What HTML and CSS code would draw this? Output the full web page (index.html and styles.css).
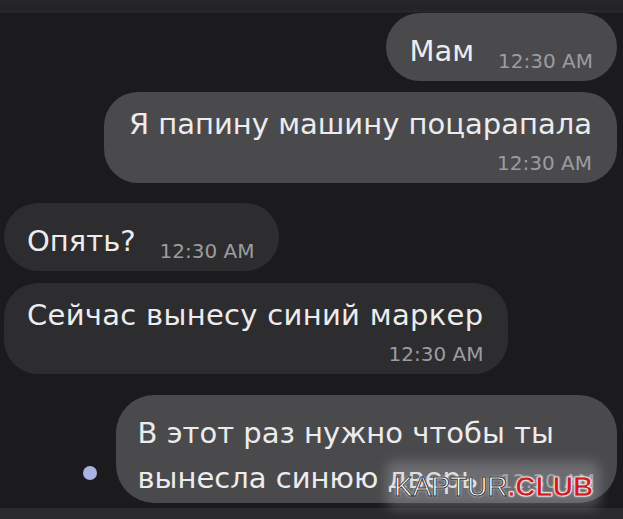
FILE: index.html
```html
<!DOCTYPE html>
<html lang="ru">
<head>
<meta charset="utf-8">
<title>Chat</title>
<link rel="stylesheet" href="styles.css">
</head>
<body>
<div class="screen">
  <div class="topbar"></div>
  <div class="thread">
    <div class="row out r1">
      <div class="bubble sent single"><span class="msg">Мам</span><span class="time">12:30 AM</span></div>
    </div>
    <div class="row out r2">
      <div class="bubble sent multi">
        <div class="msg">Я папину машину поцарапала</div>
        <div class="time">12:30 AM</div>
      </div>
    </div>
    <div class="row in r3">
      <div class="bubble recv single"><span class="msg">Опять?</span><span class="time">12:30 AM</span></div>
    </div>
    <div class="row in r4">
      <div class="bubble recv multi">
        <div class="msg wide">Сейчас вынесу синий маркер</div>
        <div class="time">12:30 AM</div>
      </div>
    </div>
    <div class="row out r5">
      <span class="dot"></span>
      <div class="bubble sent wrap">
        <span class="msg">В этот раз нужно чтобы ты<br>вынесла синюю дверь</span><span class="time">12:30 AM</span>
      </div>
    </div>
  </div>
  <div class="bottombar"></div>
  <div class="watermark">
    <div class="haze"></div>
    <span class="wm-a">KAPTUR</span><span class="wm-b">.CLUB</span>
  </div>
</div>
</body>
</html>
```
FILE: styles.css
```css
html, body {
  margin: 0;
  padding: 0;
  background: #1b1b1d;
}
.screen {
  position: relative;
  width: 623px;
  height: 519px;
  overflow: hidden;
  display: flex;
  flex-direction: column;
  font-family: "DejaVu Sans", "Noto Sans", sans-serif;
  background: #1b1b1d;
}
.topbar {
  height: 13px;
  flex: none;
  background: linear-gradient(#262628, #232325 75%, #2a2a2c 90%, #1d1d1f);
}
.thread {
  flex: 1;
  display: flex;
  flex-direction: column;
}
.row {
  display: flex;
}
.row.out {
  justify-content: flex-end;
  padding-right: 6px;
}
.row.in {
  justify-content: flex-start;
  padding-left: 4px;
}
.r2 { margin-top: 11px; padding-right: 5px; }
.r3 { margin-top: 20px; }
.r4 { margin-top: 12px; }
.r5 { margin-top: 21px; align-items: flex-end; padding-right: 8px; }

.bubble {
  color: #ececee;
  font-size: 29px;
}
.sent { background: #4a4a4d; }
.recv { background: #2d2d30; }

.single {
  display: flex;
  align-items: flex-end;
  border-radius: 34px;
  padding: 21px 24px 13px 23px;
  line-height: 34px;
  white-space: nowrap;
}
.single .time {
  margin-left: 24px;
  line-height: 22px;
  margin-bottom: -4px;
}
.multi {
  border-radius: 34px;
  padding: 15px 25px 9px 25px;
  line-height: 34px;
  white-space: nowrap;
}
.recv.multi {
  padding-left: 23px;
}
.msg.wide {
  letter-spacing: 0.3px;
}
.multi .time {
  margin-top: 11px;
  text-align: right;
  line-height: 22px;
}
.wrap {
  border-radius: 38px;
  padding: 16px 22px 2px 22px;
  line-height: 45px;
  white-space: nowrap;
}
.wrap .time {
  margin-left: 22px;
  line-height: 1;
}
.time {
  font-size: 20px;
  color: #9c9ca0;
}
.dot {
  width: 14px;
  height: 14px;
  border-radius: 50%;
  background: #aab4e2;
  margin-right: 19px;
  margin-bottom: 23px;
  flex: none;
}
.bottombar {
  height: 11px;
  flex: none;
  background: #2b2b2d;
}
.watermark {
  position: absolute;
  left: 394px;
  top: 471px;
  font-family: "Liberation Sans", Arial, sans-serif;
  font-size: 28px;
  line-height: 32px;
  white-space: nowrap;
}
.haze {
  position: absolute;
  left: -8px;
  top: -10px;
  width: 214px;
  height: 48px;
  background: rgba(190, 190, 195, 0.3);
  filter: blur(6px);
  border-radius: 10px;
}
.wm-a {
  position: relative;
  color: #ffffff;
  -webkit-text-stroke: 1px #3a3a3a;
  text-shadow: 0 0 3px rgba(255,255,255,0.9);
}
.wm-b {
  position: relative;
  color: #cf1c1f;
  font-weight: bold;
  -webkit-text-stroke: 0.6px #ffffff;
  text-shadow: 0 0 2px #ffffff, 0 0 3px rgba(255,255,255,0.8);
}
```
